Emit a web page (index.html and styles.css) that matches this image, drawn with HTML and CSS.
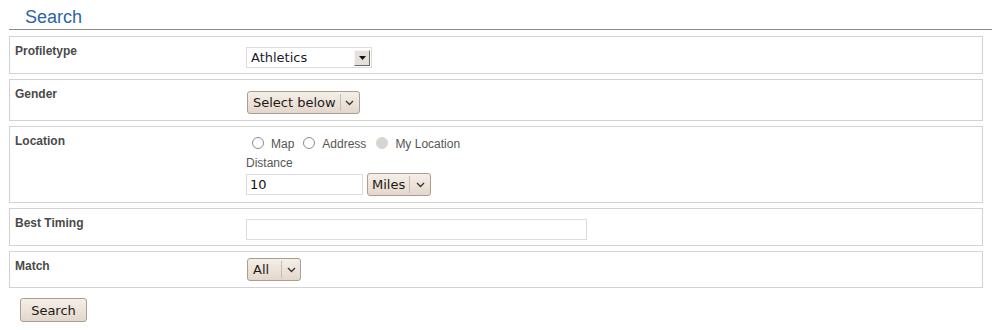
FILE: index.html
```html
<!DOCTYPE html>
<html>
<head>
<meta charset="utf-8">
<link rel="stylesheet" href="styles.css">
</head>
<body>
<div class="page">
  <h2 class="title">Search</h2>
  <form class="form">
    <div class="row r1">
      <div class="label">Profiletype</div>
      <div class="ctrl">
        <span class="oldsel">
          <span class="oldsel-text">Athletics</span>
          <span class="oldsel-btn"><svg width="7" height="4" viewBox="0 0 7 4"><path d="M0 0H7L3.5 4Z" fill="#111"/></svg></span>
        </span>
      </div>
    </div>
    <div class="row r2">
      <div class="label">Gender</div>
      <div class="ctrl">
        <span class="dd"><span class="dd-text">Select below</span><span class="dd-arrow"><svg width="9" height="6" viewBox="0 0 9 6"><path d="M1 1L4.5 4.5L8 1" fill="none" stroke="#333" stroke-width="1.3"/></svg></span></span>
      </div>
    </div>
    <div class="row r3">
      <div class="label">Location</div>
      <div class="ctrl">
        <div class="radios">
          <span class="radio first"></span><span class="rlabel">Map</span>
          <span class="radio"></span><span class="rlabel">Address</span>
          <span class="radio dis"></span><span class="rlabel">My Location</span>
        </div>
        <div class="dist">Distance</div>
        <div class="distrow">
          <span class="text dinput">10</span>
          <span class="dd miles"><span class="dd-text">Miles</span><span class="dd-arrow"><svg width="9" height="6" viewBox="0 0 9 6"><path d="M1 1L4.5 4.5L8 1" fill="none" stroke="#333" stroke-width="1.3"/></svg></span></span>
        </div>
      </div>
    </div>
    <div class="row r4">
      <div class="label">Best Timing</div>
      <div class="ctrl">
        <span class="text tinput"></span>
      </div>
    </div>
    <div class="row r5">
      <div class="label">Match</div>
      <div class="ctrl">
        <span class="dd match"><span class="dd-text">All</span><span class="dd-arrow"><svg width="9" height="6" viewBox="0 0 9 6"><path d="M1 1L4.5 4.5L8 1" fill="none" stroke="#333" stroke-width="1.3"/></svg></span></span>
      </div>
    </div>
    <div class="actions">
      <button type="button" class="btn">Search</button>
    </div>
  </form>
</div>
</body>
</html>
```

FILE: styles.css
```css
html, body {
  margin: 0;
  padding: 0;
  background: #fff;
}
.page {
  padding-left: 9px;
  font-family: "Liberation Sans", Arial, sans-serif;
}
.title {
  margin: 0;
  height: 29px;
  padding-left: 16px;
  font-size: 18px;
  font-weight: normal;
  line-height: 34px;
  color: #2d64a4;
  border-bottom: 1px solid #8a8a8a;
  box-sizing: content-box;
}
.form {
  margin: 0;
  padding-top: 6px;
  width: 974px;
}
.row {
  display: flex;
  border: 1px solid #d2d2d2;
  margin-bottom: 5px;
  box-sizing: border-box;
}
.label {
  width: 231px;
  padding: 7px 0 0 5px;
  font-size: 12px;
  font-weight: bold;
  color: #4a4a4a;
  line-height: 14px;
}
.ctrl {
  flex: 1;
}
.r1 { height: 38px; }
.r1 .ctrl { padding-top: 10px; }
.r2 { height: 42px; }
.r2 .ctrl { padding-top: 11px; }
.r3 { height: 77px; }
.r3 .ctrl { padding-top: 8px; }
.r4 { height: 38px; }
.r4 .ctrl { padding-top: 10px; }
.r5 { height: 37px; }
.r5 .ctrl { padding-top: 6px; }

.oldsel {
  display: flex;
  align-items: center;
  width: 126px;
  height: 21px;
  border: 1px solid #dcdcdc;
  box-sizing: border-box;
  font-family: "DejaVu Sans", sans-serif;
  font-size: 13px;
  color: #1a1a2e;
}
.oldsel-text {
  flex: 1;
  padding-left: 4px;
}
.oldsel-btn {
  width: 16px;
  height: 16px;
  margin-right: 1px;
  background: #e6e0da;
  border-top: 1px solid #f8f6f4;
  border-left: 1px solid #f8f6f4;
  border-right: 1px solid #6e6a66;
  border-bottom: 1px solid #6e6a66;
  box-sizing: border-box;
  display: flex;
  align-items: center;
  justify-content: center;
}

.dd {
  display: inline-flex;
  align-items: center;
  height: 23px;
  border: 1px solid #ad9d8d;
  border-radius: 3px;
  background: linear-gradient(#f5efe9, #e3d7cb);
  box-sizing: border-box;
  font-family: "DejaVu Sans", sans-serif;
  font-size: 13px;
  color: #1e1a16;
  margin-left: 1px;
}
.dd-text {
  padding: 0 4px 0 5px;
  border-right: 1px solid #c9bbad;
  line-height: 17px;
}
.dd-arrow {
  width: 18px;
  display: flex;
  justify-content: center;
  padding-top: 1px;
}
.match .dd-text {
  padding-right: 12px;
}
.miles {
  margin-left: 0;
}
.miles .dd-text {
  padding: 0 4px 0 4px;
}
.miles .dd-arrow {
  width: 20px;
}

.radios {
  display: flex;
  align-items: center;
  height: 16px;
  font-size: 12px;
  color: #555;
}
.radio {
  width: 12px;
  height: 12px;
  border: 1px solid #8c8c8c;
  border-radius: 50%;
  box-sizing: border-box;
  background: #fff;
  margin: 0 7px 0 9px;
}
.radio.first {
  margin-left: 6px;
}
.radio.dis {
  background: #d8d4d0;
  border-color: #d8d4d0;
  margin-left: 10px;
}
.rlabel {
  margin-top: 2px;
}
.dist {
  font-size: 12px;
  color: #555;
  padding-top: 5px;
  line-height: 14px;
}
.distrow {
  display: flex;
  align-items: center;
  gap: 4px;
  margin-top: 3px;
}
.text {
  display: block;
  border: 1px solid #dcdcdc;
  box-sizing: border-box;
  font-family: "DejaVu Sans", sans-serif;
  font-size: 13px;
  color: #111;
}
.dinput {
  width: 117px;
  height: 21px;
  padding-left: 3px;
  line-height: 19px;
}
.tinput {
  width: 341px;
  height: 21px;
}
.actions {
  padding: 5px 0 0 11px;
}
.btn {
  height: 24px;
  width: 67px;
  border: 1px solid #ad9d8d;
  border-radius: 3px;
  background: linear-gradient(#f5efe9, #e3d7cb);
  font-family: "DejaVu Sans", sans-serif;
  font-size: 13px;
  color: #1e1a16;
  padding: 0;
}
```
